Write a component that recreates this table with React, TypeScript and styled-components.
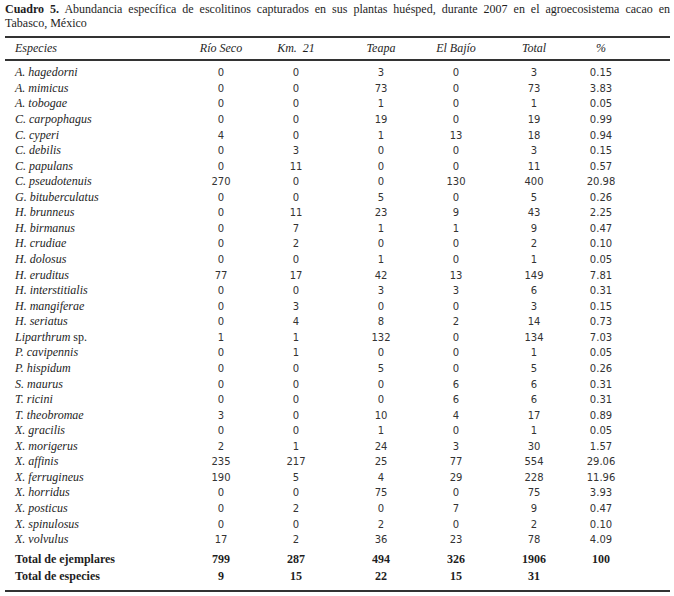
import React from "react";
import styled, { createGlobalStyle } from "styled-components";

const Global = createGlobalStyle`
  html, body { margin: 0; padding: 0; background: #ffffff; }
  body { width: 674px; height: 596px; overflow: hidden; }
`;

const Page = styled.div`
  width: 674px;
  height: 596px;
  background: #fff;
  color: #1e1e1e;
  font-family: "Liberation Serif", "Times New Roman", serif;
`;

const Caption = styled.div`
  padding: 2px 4px 0 5px;
  font-size: 12px;
  line-height: 14px;
  color: #1e1e1e;
`;

const CaptionLine = styled.div<{ $justify?: boolean }>`
  text-align: ${(p) => (p.$justify ? "justify" : "left")};
  text-align-last: ${(p) => (p.$justify ? "justify" : "left")};
  white-space: nowrap;
`;

const CaptionLabel = styled.b`
  font-weight: bold;
`;

const Table = styled.div`
  margin: 6px 0 0 5px;
  width: 665px;
  border-top: 2px solid #333;
  border-bottom: 2px solid #333;
`;

const COLS = "186px 60px 90px 80px 70px 86px 48px";

const HeaderRow = styled.div`
  display: grid;
  grid-template-columns: ${COLS};
  height: 21px;
  align-items: center;
  border-bottom: 2px solid #333;
  font-style: italic;
  font-size: 12px;
`;

const Body = styled.div<{ $pt: number; $pb: number }>`
  padding-top: ${(p) => p.$pt}px;
  padding-bottom: ${(p) => p.$pb}px;
`;

const Row = styled.div<{ $h: number }>`
  display: grid;
  grid-template-columns: ${COLS};
  height: ${(p) => p.$h}px;
  align-items: center;
`;

const NameCell = styled.div<{ $bold?: boolean }>`
  padding-left: 10px;
  font-size: 12px;
  font-style: ${(p) => (p.$bold ? "normal" : "italic")};
  font-weight: ${(p) => (p.$bold ? "bold" : "normal")};
  white-space: nowrap;
`;

const Plain = styled.span`
  font-style: normal;
`;

const HeadCell = styled.div<{ $left?: boolean }>`
  text-align: ${(p) => (p.$left ? "left" : "center")};
  padding-left: ${(p) => (p.$left ? "10px" : "0")};
  white-space: pre;
`;

const NumCell = styled.div`
  text-align: center;
  font-family: "DejaVu Sans", Verdana, sans-serif;
  font-size: 10px;
  color: #333;
`;

const BoldNumCell = styled.div`
  text-align: center;
  font-family: "Liberation Serif", "Times New Roman", serif;
  font-size: 12px;
  font-weight: bold;
`;

type Rec = [string, string, string, string, string, string, string];

const rows: Rec[] = [
  ["A. hagedorni", "0", "0", "3", "0", "3", "0.15"],
  ["A. mimicus", "0", "0", "73", "0", "73", "3.83"],
  ["A. tobogae", "0", "0", "1", "0", "1", "0.05"],
  ["C. carpophagus", "0", "0", "19", "0", "19", "0.99"],
  ["C. cyperi", "4", "0", "1", "13", "18", "0.94"],
  ["C. debilis", "0", "3", "0", "0", "3", "0.15"],
  ["C. papulans", "0", "11", "0", "0", "11", "0.57"],
  ["C. pseudotenuis", "270", "0", "0", "130", "400", "20.98"],
  ["G. bituberculatus", "0", "0", "5", "0", "5", "0.26"],
  ["H. brunneus", "0", "11", "23", "9", "43", "2.25"],
  ["H. birmanus", "0", "7", "1", "1", "9", "0.47"],
  ["H. crudiae", "0", "2", "0", "0", "2", "0.10"],
  ["H. dolosus", "0", "0", "1", "0", "1", "0.05"],
  ["H. eruditus", "77", "17", "42", "13", "149", "7.81"],
  ["H. interstitialis", "0", "0", "3", "3", "6", "0.31"],
  ["H. mangiferae", "0", "3", "0", "0", "3", "0.15"],
  ["H. seriatus", "0", "4", "8", "2", "14", "0.73"],
  ["Liparthrum|sp.", "1", "1", "132", "0", "134", "7.03"],
  ["P. cavipennis", "0", "1", "0", "0", "1", "0.05"],
  ["P. hispidum", "0", "0", "5", "0", "5", "0.26"],
  ["S. maurus", "0", "0", "0", "6", "6", "0.31"],
  ["T. ricini", "0", "0", "0", "6", "6", "0.31"],
  ["T. theobromae", "3", "0", "10", "4", "17", "0.89"],
  ["X. gracilis", "0", "0", "1", "0", "1", "0.05"],
  ["X. morigerus", "2", "1", "24", "3", "30", "1.57"],
  ["X. affinis", "235", "217", "25", "77", "554", "29.06"],
  ["X. ferrugineus", "190", "5", "4", "29", "228", "11.96"],
  ["X. horridus", "0", "0", "75", "0", "75", "3.93"],
  ["X. posticus", "0", "2", "0", "7", "9", "0.47"],
  ["X. spinulosus", "0", "0", "2", "0", "2", "0.10"],
  ["X. volvulus", "17", "2", "36", "23", "78", "4.09"],
];

const totals: Rec[] = [
  ["Total de ejemplares", "799", "287", "494", "326", "1906", "100"],
  ["Total de especies", "9", "15", "22", "15", "31", ""],
];

const headers = ["Río Seco", "Km.  21", "Teapa", "El Bajío", "Total", "%"];

function renderName(name: string) {
  if (name.includes("|")) {
    const [a, b] = name.split("|");
    return (
      <>
        {a} <Plain>{b}</Plain>
      </>
    );
  }
  return name;
}

export default function App() {
  return (
    <Page>
      <Global />
      <Caption>
        <CaptionLine $justify>
          <CaptionLabel>Cuadro 5.</CaptionLabel> Abundancia específica de escolitinos capturados en sus plantas
          huésped, durante 2007 en el agroecosistema cacao en
        </CaptionLine>
        <CaptionLine>Tabasco, México</CaptionLine>
      </Caption>
      <Table>
        <HeaderRow>
          <HeadCell $left>Especies</HeadCell>
          {headers.map((h) => (
            <HeadCell key={h}>{h}</HeadCell>
          ))}
        </HeaderRow>
        <Body $pt={4} $pb={0}>
          {rows.map((r) => (
            <Row $h={15.57} key={r[0]}>
              <NameCell>{renderName(r[0])}</NameCell>
              {r.slice(1).map((v, i) => (
                <NumCell key={i}>{v}</NumCell>
              ))}
            </Row>
          ))}
        </Body>
        <Body $pt={4} $pb={5}>
          {totals.map((r) => (
            <Row $h={17} key={r[0]}>
              <NameCell $bold>{r[0]}</NameCell>
              {r.slice(1).map((v, i) => (
                <BoldNumCell key={i}>{v}</BoldNumCell>
              ))}
            </Row>
          ))}
        </Body>
      </Table>
    </Page>
  );
}
